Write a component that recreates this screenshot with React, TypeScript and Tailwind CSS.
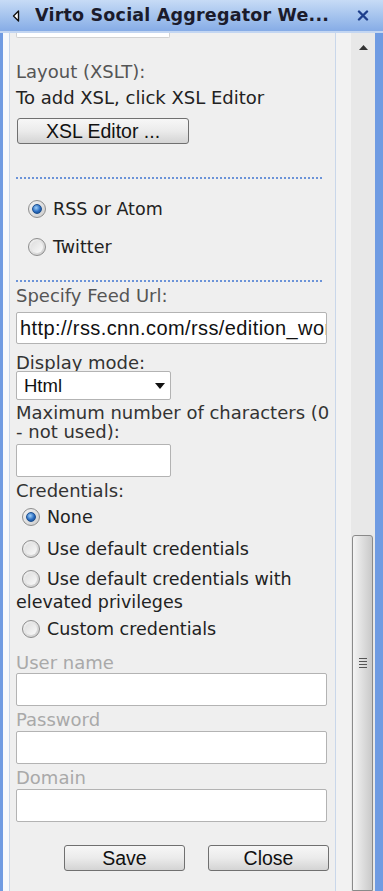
import React from 'react';

const ui = { fontFamily: '"DejaVu Sans", Verdana, sans-serif' };
const arial = { fontFamily: '"Liberation Sans", Arial, sans-serif' };

const Radio: React.FC<{ checked?: boolean }> = ({ checked }) => (
  <span className="flex h-[18px] w-[18px] shrink-0 items-center justify-center rounded-full border border-[#8d8d8d] bg-gradient-to-br from-[#f4f4f4] to-[#cdcdcd]">
    {checked ? (
      <span className="h-[10px] w-[10px] rounded-full border border-[#1c4f8f] bg-[radial-gradient(circle_at_40%_35%,#9fd0fa,#2a6cc0_55%,#123f7a)]" />
    ) : (
      <span className="h-[12px] w-[12px] rounded-full bg-gradient-to-br from-[#dedede] to-[#fafafa]" />
    )}
  </span>
);

const Btn: React.FC<{ label: string; className?: string }> = ({ label, className }) => (
  <div
    style={arial}
    className={`flex h-[26px] items-center justify-center rounded-[3px] border border-[#707070] bg-gradient-to-b from-[#f7f7f7] via-[#ebebeb] to-[#d4d4d4] text-[19.5px] text-[#111] ${className ?? ''}`}
  >
    {label}
  </div>
);

const Field: React.FC<{ className?: string; children?: React.ReactNode }> = ({ className, children }) => (
  <div className={`rounded-[2px] border border-[#b3b3b3] bg-white ${className ?? ''}`}>{children}</div>
);

const RadioRow: React.FC<{ checked?: boolean; label: string; className?: string }> = ({ checked, label, className }) => (
  <div className={`flex h-[20px] items-center gap-[7px] text-[17.5px] text-[#222] ${className ?? ''}`}>
    <Radio checked={checked} />
    <span>{label}</span>
  </div>
);

export default function App() {
  return (
    <div style={ui} className="flex h-[891px] w-[383px] flex-col overflow-hidden bg-[#f0f0f0]">
      {/* title bar */}
      <div className="flex h-[33px] shrink-0 items-center border-b-[2px] border-[#c3d6f2] bg-gradient-to-b from-[#c7dbf6] via-[#a6c4ee] to-[#86ace6] pl-[12px] pr-[14px]">
        <svg width="8" height="12" viewBox="0 0 8 12" className="mr-[15px]">
          <path d="M6.5 1 L1.5 6 L6.5 11 Z" fill="#fff" stroke="#111" strokeWidth="1.4" strokeLinejoin="round" />
        </svg>
        <span className="flex-1 truncate text-[17.5px] font-bold tracking-[0.2px] text-[#1b1b2b]">Virto Social Aggregator We...</span>
        <svg width="12" height="11" viewBox="0 0 12 11">
          <path d="M2 1.5 L10 9.5 M10 1.5 L2 9.5" stroke="#1e3f8c" strokeWidth="2.4" strokeLinecap="round" />
        </svg>
      </div>

      <div className="flex flex-1 border-l-[3px] border-r-[8px] border-[#6f9be2] bg-[#f7f9fc] pl-[6px]">
        {/* content */}
        <div className="flex w-[327px] flex-col border-x border-[#c9d7ea] bg-[#efefef] pl-[6px] pr-[4px] text-[18px] leading-[20px] text-[#2b2b2b]">
          <div className="h-[5px] w-[154px] rounded-b-[2px] border border-t-0 border-[#d2d2d2] bg-white" />

          <div className="mt-[24px] h-[20px] text-[#555]">Layout (XSLT):</div>
          <div className="mt-[6px] h-[20px] text-[#222]">To add XSL, click XSL Editor</div>
          <Btn label="XSL Editor ..." className="mt-[10px] ml-[1px] w-[172px]" />

          <div className="mt-[33px] w-[306px] border-t-2 border-dotted border-[#6b93d8]" />

          <RadioRow checked label="RSS or Atom" className="mt-[20px] pl-[12px]" />
          <RadioRow label="Twitter" className="mt-[18px] pl-[12px]" />

          <div className="mt-[23px] w-[306px] border-t-2 border-dotted border-[#6b93d8]" />

          <div className="mt-[4px] h-[20px] text-[#555]">Specify Feed Url:</div>
          <Field className="mt-[6px] flex h-[32px] w-[311px] items-center overflow-hidden pl-[3px]">
            <span style={arial} className="whitespace-nowrap text-[20px] tracking-[0.4px] text-[#111]">http://rss.cnn.com/rss/edition_world.rss</span>
          </Field>

          <div className="mt-[9px] h-[18px] text-[#333]">Display mode:</div>
          <Field className="flex h-[29px] w-[155px] items-center justify-between pl-[7px] pr-[5px]">
            <span style={arial} className="text-[18.5px] text-[#111]">Html</span>
            <svg width="10" height="6" viewBox="0 0 10 6">
              <path d="M0 0 H10 L5 6 Z" fill="#111" />
            </svg>
          </Field>

          <div className="mt-[3px] leading-[19px] text-[#333]">
            Maximum number of characters (0
            <br />- not used):
          </div>
          <Field className="mt-[3px] h-[33px] w-[155px]" />

          <div className="mt-[4px] h-[18px] text-[#333]">Credentials:</div>
          <RadioRow checked label="None" className="mt-[8px] pl-[6px]" />
          <RadioRow label="Use default credentials" className="mt-[12px] pl-[6px]" />
          <RadioRow label="Use default credentials with" className="mt-[10px] pl-[6px]" />
          <div className="mt-[3px] h-[20px] text-[17.5px] text-[#222]">elevated privileges</div>
          <RadioRow label="Custom credentials" className="mt-[7px] pl-[6px]" />

          <div className="mt-[14px] h-[18px] text-[#a9a9a9]">User name</div>
          <Field className="mt-[2px] h-[33px] w-[311px] border-[#9a9a9a]" />
          <div className="mt-[4px] h-[18px] text-[#a9a9a9]">Password</div>
          <Field className="mt-[3px] h-[33px] w-[311px] border-[#9a9a9a]" />
          <div className="mt-[4px] h-[18px] text-[#a9a9a9]">Domain</div>
          <Field className="mt-[3px] h-[33px] w-[311px] border-[#9a9a9a]" />

          <div className="mt-[23px] flex gap-[23px] pl-[48px]">
            <Btn label="Save" className="w-[121px]" />
            <Btn label="Close" className="w-[121px]" />
          </div>
        </div>

        {/* scrollbar */}
        <div className="w-[15px] bg-[#f2f2f2]" />
        <div className="flex w-[24px] flex-col bg-[#e8e8e8]">
          <div className="flex h-[24px] items-center justify-center pt-[4px]">
            <svg width="9" height="5" viewBox="0 0 9 5">
              <path d="M0 5 L4.5 0 L9 5 Z" fill="#333" />
            </svg>
          </div>
          <div className="mt-[478px] ml-[1px] flex w-[21px] flex-1 items-center justify-center rounded-t-[3px] border border-[#8a8a8a] bg-gradient-to-r from-[#f4f4f4] via-[#dedede] to-[#c9c9c9]">
            <div className="mb-[100px] flex flex-col gap-[2px]">
              <div className="h-[1px] w-[8px] bg-[#555]" />
              <div className="h-[1px] w-[8px] bg-[#555]" />
              <div className="h-[1px] w-[8px] bg-[#555]" />
              <div className="h-[1px] w-[8px] bg-[#555]" />
            </div>
          </div>
        </div>
      </div>
    </div>
  );
}
